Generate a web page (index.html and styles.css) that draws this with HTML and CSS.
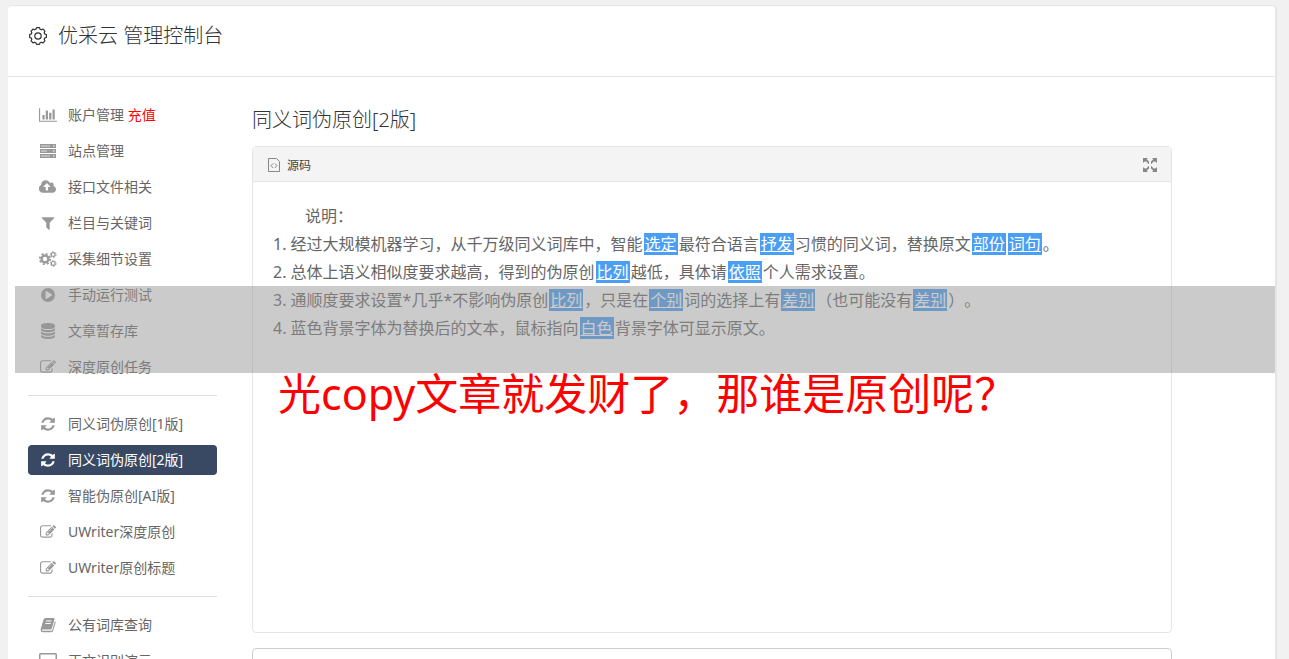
FILE: index.html
```html
<!DOCTYPE html>
<html lang="zh-CN">
<head>
  <meta charset="UTF-8">
  <meta name="viewport" content="width=device-width, initial-scale=1.0">
  <title>优采云 管理控制台</title>
  <link rel="stylesheet" href="styles.css">
</head>
<body>
  <!-- Shared icon shapes -->
  <svg class="sprite" aria-hidden="true">
    <symbol id="i-chart" viewBox="0 0 2048 1792"><path d="M640 896v512h-256v-512h256zm384-512v1024h-256v-1024h256zm1024 1152v128h-2048v-1536h128v1408h1920zm-640-896v768h-256v-768h256zm384-384v1152h-256v-1152h256z"/></symbol>
    <symbol id="i-server" viewBox="0 0 18 16">
      <path d="M1 1h16v4H1zM1 6h16v4H1zM1 11h16v4H1z"/>
      <path fill="#ddd" d="M2 2.500h9v1H2zM2 7.500h6v1H2zM2 12.500h9v1H2zM14 2.300h1.500v1.400H14zM14 7.300h1.500v1.400H14zM14 12.300h1.500v1.400H14z"/>
    </symbol>
    <symbol id="i-cloud" viewBox="0 0 1920 1792"><path d="M1216 864q0-14-9-23l-352-352q-9-9-23-9t-23 9l-351 351q-10 12-10 24 0 14 9 23t23 9h224v352q0 13 9.500 22.500t22.500 9.500h192q13 0 22.500-9.500t9.500-22.500v-352h224q13 0 22.500-9.500t9.500-22.500zm640 288q0 159-112.500 271.500t-271.500 112.500h-1088q-185 0-316.500-131.500t-131.500-316.500q0-130 70-240t188-165q-2-30-2-43 0-212 150-362t362-150q156 0 285.500 87t188.500 231q71-62 166-62 106 0 181 75t75 181q0 76-41 138 130 31 213.500 135.500t83.500 238.500z"/></symbol>
    <symbol id="i-filter" viewBox="0 0 1792 1792"><path d="M1595 295q17 41-14 70l-493 493v742q0 42-39 59-13 5-25 5-27 0-45-19l-256-256q-19-19-19-45v-486l-493-493q-31-29-14-70 17-39 59-39h1280q42 0 59 39z"/></symbol>
    <symbol id="i-gears" viewBox="0 0 18 16">
      <g fill="none" stroke="currentColor">
        <circle cx="6" cy="8" r="3.400" stroke-width="2.400"/>
        <circle cx="6" cy="8" r="5.200" stroke-width="1.800" stroke-dasharray="2.040 2.040"/>
        <circle cx="14.200" cy="3.600" r="1.900" stroke-width="1.200"/>
        <circle cx="14.200" cy="3.600" r="2.900" stroke-width="1" stroke-dasharray="1.520 1.520"/>
        <circle cx="14.200" cy="12.400" r="1.900" stroke-width="1.200"/>
        <circle cx="14.200" cy="12.400" r="2.900" stroke-width="1" stroke-dasharray="1.520 1.520"/>
      </g>
    </symbol>
    <symbol id="i-play" viewBox="0 0 16 16"><path fill-rule="evenodd" d="M8 1a7 7 0 1 0 0 14a7 7 0 1 0 0-14zM5.600 4.500q0-.8.8-.5l5.400 3.400q.8.600 0 1.200l-5.400 3.400q-.8.300-.8-.5z"/></symbol>
    <symbol id="i-database" viewBox="0 0 16 16"><path d="M1 2.600C1 .9 4 0 8 0s7 .9 7 2.600v.8C15 5.100 12 6 8 6S1 5.100 1 3.400zM1 5.200C2.600 6.500 5 7 8 7s5.400-.5 7-1.800v1.600C15 8.300 12 9.300 8 9.300S1 8.300 1 6.800zM1 8.600c1.600 1.300 4 1.800 7 1.800s5.400-.5 7-1.800v1.600c0 1.500-3 2.500-7 2.500s-7-1-7-2.500zM1 12c1.600 1.300 4 1.800 7 1.800s5.400-.5 7-1.800v1.500C15 15 12 16 8 16s-7-1-7-2.500z"/></symbol>
    <symbol id="i-edit" viewBox="0 0 1792 1792"><path d="M888 1184l116-116-152-152-116 116v56h96v96h56zm440-720q-16-16-33 1l-350 350q-17 17-1 33t33-1l350-350q17-17 1-33zm80 594v190q0 119-84.500 203.500t-203.500 84.500h-832q-119 0-203.500-84.500t-84.500-203.500v-832q0-119 84.500-203.500t203.500-84.500h832q63 0 117 25 15 7 18 23 3 17-9 29l-49 49q-14 14-32 8-23-6-45-6h-832q-66 0-113 47t-47 113v832q0 66 47 113t113 47h832q66 0 113-47t47-113v-126q0-13 9-22l64-64q15-15 35-7t20 29zm-96-738l288 288-672 672h-288v-288zm444 132l-92 92-288-288 92-92q28-28 68-28t68 28l152 152q28 28 28 68t-28 68z"/></symbol>
    <symbol id="i-refresh" viewBox="0 0 1792 1792"><path d="M1639 1056q0 5-1 7-64 268-268 434.500t-478 166.500q-146 0-282.500-55t-243.500-157l-129 129q-19 19-45 19t-45-19-19-45v-448q0-26 19-45t45-19h448q26 0 45 19t19 45-19 45l-137 137q71 66 161 102t187 36q134 0 250-65t186-179q11-17 53-117 8-23 30-23h192q13 0 22.500 9.500t9.500 22.500zm25-800v448q0 26-19 45t-45 19h-448q-26 0-45-19t-19-45 19-45l138-138q-148-137-349-137-134 0-250 65t-186 179q-11 17-53 117-8 23-30 23h-199q-13 0-22.500-9.500t-9.500-22.500v-7q65-268 270-434.500t480-166.500q146 0 284 55.500t245 156.500l130-129q19-19 45-19t45 19 19 45z"/></symbol>
    <symbol id="i-book" viewBox="0 0 16 16"><path fill-rule="evenodd" d="M5.500 1h8q1.300.2 1 1.500l-2.600 8.700q-.4 1.200-1.600 1.200H2.600q-.8 0-.8.600t1 .8h8.400q.8 0 1.100-.8L15 4.200q1 .4.600 1.600l-2.500 8q-.5 1.400-1.900 1.400H2.800Q.8 15.200.6 13q-.1-1 .6-2.600l2-7Q4 1 5.500 1zM6.200 3.600l-.3 1h5.400l.3-1zM5.500 6l-.3 1h5.400l.3-1z"/></symbol>
    <symbol id="i-screen" viewBox="0 0 18 16"><path fill-rule="evenodd" d="M1.500 0h15Q18 0 18 1.500v9q0 1.500-1.500 1.500H11l1 3H6l1-3H1.500Q0 12 0 10.500v-9Q0 0 1.500 0zM1.500 1.500v9h15v-9z"/></symbol>
  </svg>

  <div class="wrapper">
    <header class="header">
      <svg class="header-icon" viewBox="-10 -10 20 20" aria-hidden="true">
        <path d="M8.370-1.480L8.370 1.480 6.680 2.100 6.210 3.230 6.960 4.880 4.880 6.960 3.230 6.210 2.100 6.680 1.480 8.370-1.480 8.370-2.100 6.680-3.230 6.210-4.880 6.960-6.960 4.880-6.210 3.230-6.680 2.100-8.370 1.480-8.370-1.480-6.680-2.100-6.210-3.230-6.960-4.880-4.880-6.960-3.230-6.210-2.100-6.680-1.480-8.370 1.480-8.370 2.100-6.680 3.230-6.210 4.880-6.960 6.960-4.880 6.210-3.230 6.680-2.100z"/>
        <circle r="3.200"/>
      </svg>
      <h1>优采云 管理控制台</h1>
    </header>

    <div class="content">
      <nav class="sidebar">
        <a href="#"><svg><use href="#i-chart"/></svg><span>账户管理 <em>充值</em></span></a>
        <a href="#"><svg><use href="#i-server"/></svg><span>站点管理</span></a>
        <a href="#"><svg><use href="#i-cloud"/></svg><span>接口文件相关</span></a>
        <a href="#"><svg><use href="#i-filter"/></svg><span>栏目与关键词</span></a>
        <a href="#"><svg><use href="#i-gears"/></svg><span>采集细节设置</span></a>
        <a href="#"><svg><use href="#i-play"/></svg><span>手动运行测试</span></a>
        <a href="#"><svg><use href="#i-database"/></svg><span>文章暂存库</span></a>
        <a href="#"><svg><use href="#i-edit"/></svg><span>深度原创任务</span></a>
        <hr>
        <a href="#"><svg><use href="#i-refresh"/></svg><span>同义词伪原创[1版]</span></a>
        <a href="#" class="active"><svg><use href="#i-refresh"/></svg><span>同义词伪原创[2版]</span></a>
        <a href="#"><svg><use href="#i-refresh"/></svg><span>智能伪原创[AI版]</span></a>
        <a href="#"><svg><use href="#i-edit"/></svg><span>UWriter深度原创</span></a>
        <a href="#"><svg><use href="#i-edit"/></svg><span>UWriter原创标题</span></a>
        <hr>
        <a href="#"><svg><use href="#i-book"/></svg><span>公有词库查询</span></a>
        <a href="#"><svg><use href="#i-screen"/></svg><span>正文识别演示</span></a>
      </nav>

      <main class="main">
        <h2>同义词伪原创[2版]</h2>
        <div class="editor">
          <div class="toolbar">
            <button type="button" class="source">
              <svg viewBox="0 0 12 14" aria-hidden="true"><path d="M.5.500h8l3 3v10H.5z"/><path d="M5 5.500L3 7.700l2 2.200M7 5.500l2 2.200-2 2.200"/></svg>
              源码
            </button>
            <button type="button" class="expand" aria-label="全屏">
              <svg viewBox="0 0 14 14" aria-hidden="true"><path d="M0 0h5L3.700 1.300 6 3.600V6H5.500L3.500 3.500 1.300 3.700 0 5zM14 0v5l-1.300-1.300-2.200-.2L8.500 6H8V3.600l2.300-2.300L9 0zM0 14V9l1.300 1.300 2.200.2L5.500 8H6v2.400l-2.300 2.300L5 14zM14 14H9l1.300-1.300L8 10.400V8h.5l2 2.500 2.200-.2L14 9z"/></svg>
            </button>
          </div>
          <div class="editor-body">
            <p class="indent">说明：</p>
            <p>1. 经过大规模机器学习，从千万级同义词库中，智能<mark>选定</mark>最符合语言<mark>抒发</mark>习惯的同义词，替换原文<mark>部份</mark><mark>词句</mark>。</p>
            <p>2. 总体上语义相似度要求越高，得到的伪原创<mark>比列</mark>越低，具体请<mark>依照</mark>个人需求设置。</p>
            <p>3. 通顺度要求设置*几乎*不影响伪原创<mark>比列</mark>，只是在<mark>个别</mark>词的选择上有<mark>差别</mark>（也可能没有<mark>差别</mark>）。</p>
            <p>4. 蓝色背景字体为替换后的文本，鼠标指向<mark>白色</mark>背景字体可显示原文。</p>
          </div>
        </div>
        <textarea class="result" aria-label="结果"></textarea>
      </main>
    </div>
  </div>

  <div class="band"></div>
  <div class="caption">光copy文章就发财了，那谁是原创呢？</div>
</body>
</html>
```
FILE: styles.css
```css
* {
  box-sizing: border-box;
}

body {
  position: relative;
  margin: 0;
  padding: 5px 12px 0 8px;
  height: 100vh;
  overflow: hidden;
  background: #f1f1f1;
  color: #666;
  font-family: "Noto Sans", "Noto Sans CJK SC", sans-serif;
  font-size: 14px;
  text-spacing-trim: space-all;
}

h1, h2, p {
  margin: 0;
  font-weight: 400;
}

.sprite {
  display: none;
}

.wrapper {
  background: #fff;
  border: 1px solid #e5e5e5;
  border-right-width: 2px;
  border-left: none;
  border-radius: 4px;
}

/* Header */
.header {
  display: flex;
  align-items: center;
  gap: 10px;
  height: 71px;
  padding: 0 20px 10px;
  border-bottom: 1px solid #e5e5e5;
  color: #333;
}

.header h1 {
  font-size: 20px;
  font-weight: 300;
  line-height: 28px;
}

.header-icon {
  width: 20px;
  height: 20px;
  fill: none;
  stroke: #333;
  stroke-width: 1.2;
  stroke-linejoin: round;
}

.content {
  display: flex;
  gap: 35px;
  padding: 23px 103px 20px 20px;
}

/* Sidebar */
.sidebar {
  display: flex;
  flex-direction: column;
  flex: 0 0 189px;
  gap: 6px;
}

.sidebar a {
  display: flex;
  align-items: center;
  gap: 11px;
  height: 30px;
  padding-left: 11px;
  border-radius: 4px;
  color: #666;
  line-height: 30px;
  text-decoration: none;
}

.sidebar svg {
  width: 18px;
  height: 16px;
  color: #999;
  fill: currentColor;
}

.sidebar em {
  color: #f00;
  font-style: normal;
}

.sidebar .active {
  background: #394963;
  color: #fff;
}

.sidebar .active svg {
  color: #fff;
}

.sidebar hr {
  width: 100%;
  margin: 7px 0;
  border: none;
  border-top: 1px solid #ddd;
}

/* Main column */
.main {
  flex: 1;
  min-width: 0;
}

.main h2 {
  margin: 6px 0 12px;
  color: #333;
  font-size: 20px;
  font-weight: 300;
  line-height: 28px;
}

.editor {
  border: 1px solid #e5e5e5;
  border-radius: 4px;
}

.toolbar {
  display: flex;
  justify-content: space-between;
  align-items: center;
  height: 35px;
  padding: 2px 14px 0 15px;
  background: #f4f4f4;
  border-bottom: 1px solid #e5e5e5;
}

.toolbar button {
  display: flex;
  align-items: center;
  gap: 7px;
  padding: 0;
  border: none;
  background: none;
  color: #444;
  font: inherit;
  font-size: 12px;
}

.source svg {
  width: 12px;
  height: 14px;
  fill: none;
  stroke: #888;
}

.expand svg {
  width: 14px;
  height: 14px;
  fill: #888;
}

.editor-body {
  min-height: 450px;
  padding: 20px;
  font-size: 16px;
  line-height: 28px;
}

.indent {
  text-indent: 2em;
}

mark {
  margin: 0 1px;
  padding: 0 1px;
  background: #4a9ef3;
  color: #fff;
  text-decoration: underline;
}

.result {
  display: block;
  width: 100%;
  height: 120px;
  margin-top: 15px;
  border: 1px solid #ccc;
  border-radius: 4px;
  resize: none;
}

/* Band and caption laid over the page */
.band {
  position: absolute;
  top: 286px;
  left: 15px;
  right: 14px;
  height: 87px;
  background: rgba(149, 149, 149, 0.49);
}

.caption {
  position: absolute;
  top: 364px;
  left: 278px;
  color: #f00;
  font-size: 43px;
  line-height: 60px;
  white-space: nowrap;
}
```
